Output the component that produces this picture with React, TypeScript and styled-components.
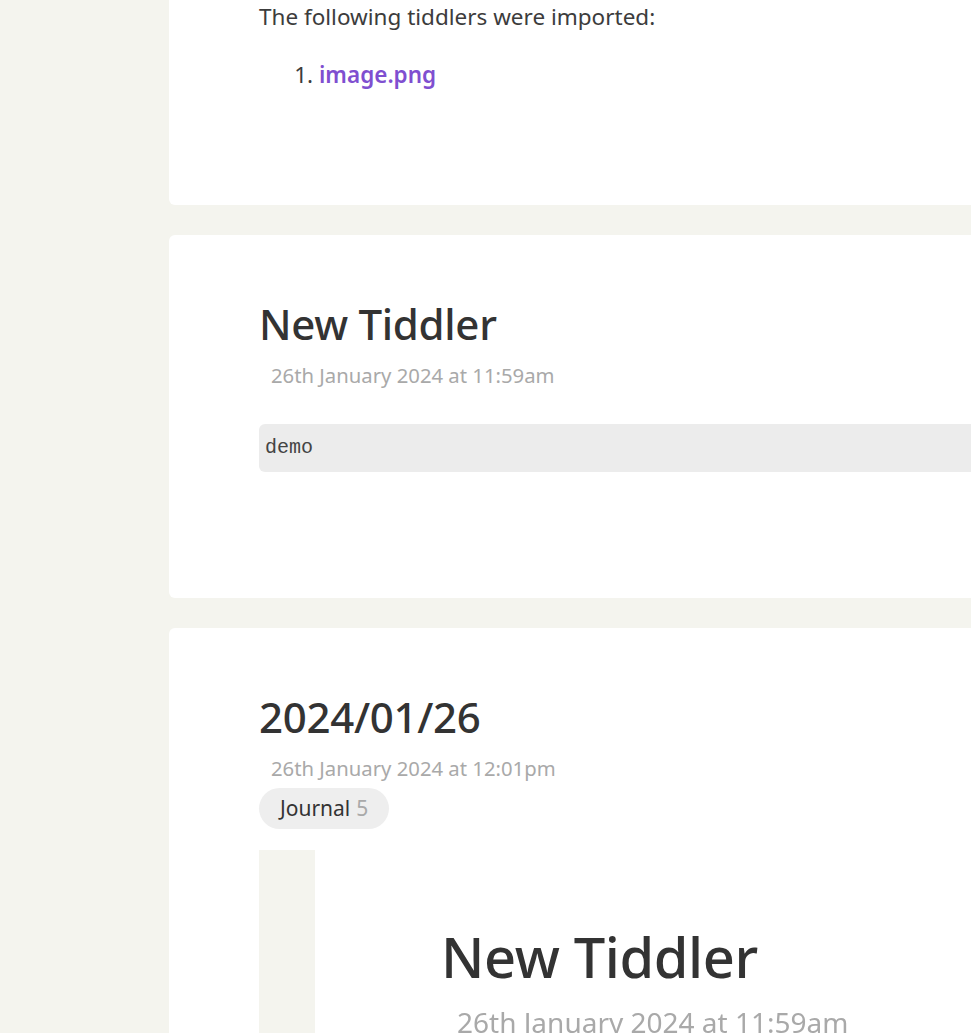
import React from "react"
import styled, { createGlobalStyle } from "styled-components"

const colors = {
  page: "#f4f4ee",
  card: "#ffffff",
  text: "#333333",
  body: "#3c3c3c",
  muted: "#a9a9a9",
  link: "#7f4fd0",
  code: "#ececec",
  tag: "#eeeeee",
}

const GlobalStyle = createGlobalStyle`
  html, body {
    margin: 0;
    padding: 0;
    background: ${colors.page};
    overflow: hidden;
  }
  body {
    font-family: "Noto Sans", "Open Sans", sans-serif;
    color: ${colors.text};
  }
`

export default function App() {
  return (
    <>
      <GlobalStyle />
      <Page>
        <Sidebar />
        <River>
          <Card $pad="40px 0 113px 90px">
            <Body>
              <Paragraph>The following tiddlers were imported:</Paragraph>
              <List>
                <li>
                  <Link href="#">image.png</Link>
                </li>
              </List>
            </Body>
          </Card>

          <Card>
            <Title>New Tiddler</Title>
            <Subtitle>26th January 2024 at 11:59am</Subtitle>
            <Code>demo</Code>
          </Card>

          <Card>
            <Title>2024/01/26</Title>
            <Subtitle>26th January 2024 at 12:01pm</Subtitle>
            <Tags>
              <Tag>
                Journal <TagCount>5</TagCount>
              </Tag>
            </Tags>
            <Shot>
              <ShotSide />
              <ShotMain>
                <ShotTitle>New Tiddler</ShotTitle>
                <ShotDate>26th January 2024 at 11:59am</ShotDate>
              </ShotMain>
            </Shot>
          </Card>
        </River>
      </Page>
    </>
  )
}

const Page = styled.div`
  display: flex;
  align-items: flex-start;
  height: 1033px;
  overflow: hidden;
`

const Sidebar = styled.div`
  flex: 0 0 169px;
`

const River = styled.div`
  flex: 0 0 900px;
  display: flex;
  flex-direction: column;
  gap: 30px;
  margin-top: -40px;
`

const Card = styled.section<{ $pad?: string }>`
  background: ${colors.card};
  border-radius: 6px;
  padding: ${(p) => p.$pad ?? "61px 0 126px 90px"};
`

const Title = styled.h2`
  margin: 0;
  font-size: 42px;
  font-weight: 500;
  line-height: 56px;
  letter-spacing: -0.3px;
  color: ${colors.text};
`

const Subtitle = styled.div`
  margin: 9px 0 0 12px;
  font-size: 20.3px;
  line-height: 28px;
  color: ${colors.muted};
`

const Body = styled.div`
  font-size: 22.5px;
  line-height: 1.5;
  color: ${colors.body};
`

const Paragraph = styled.p`
  margin: 0;
`

const List = styled.ol`
  margin: 24px 0 0;
  padding-left: 60px;
`

const Link = styled.a`
  color: ${colors.link};
  font-weight: 600;
  text-decoration: none;
`

const Code = styled.pre`
  margin: 35px 0 0;
  padding: 10px 6px;
  background: ${colors.code};
  border-radius: 6px;
  font-family: "Liberation Mono", "Courier New", monospace;
  font-size: 20px;
  line-height: 28px;
  color: #444444;
`

const Tags = styled.div`
  display: flex;
  margin-top: 6px;
`

const Tag = styled.span`
  display: inline-flex;
  align-items: baseline;
  gap: 6px;
  height: 41px;
  line-height: 41px;
  padding: 0 21px;
  border-radius: 21px;
  background: ${colors.tag};
  font-size: 21px;
  color: ${colors.text};
`

const TagCount = styled.span`
  color: ${colors.muted};
`

const Shot = styled.div`
  display: flex;
  margin-top: 21px;
  height: 300px;
`

const ShotSide = styled.div`
  flex: 0 0 56px;
  background: ${colors.page};
`

const ShotMain = styled.div`
  flex: 1;
  padding: 73px 0 0 126px;
  filter: blur(0.4px);
`

const ShotTitle = styled.div`
  font-size: 56px;
  font-weight: 500;
  letter-spacing: -0.4px;
  line-height: 1.2;
  color: ${colors.text};
`

const ShotDate = styled.div`
  margin: 13px 0 0 16px;
  font-size: 28px;
  color: ${colors.muted};
`
